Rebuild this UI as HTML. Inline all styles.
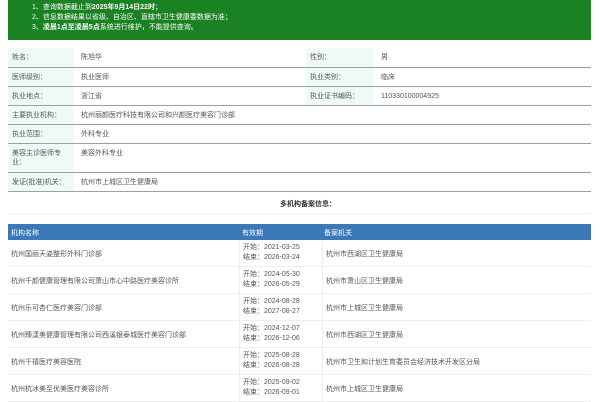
<!DOCTYPE html>
<html><head><meta charset="utf-8"><style>
*{margin:0;padding:0;box-sizing:border-box}
body{width:600px;height:400px;overflow:hidden;background:#fff;font-family:"Liberation Sans","Noto Sans CJK SC",sans-serif;font-size:7px;color:#555;position:relative}
.ban{position:absolute;left:8px;top:0;width:583px;height:40px;background:#1a8222;color:#fff;font-size:7px;line-height:10px;padding:3px 0 0 24px;overflow:hidden}
.ban b{font-weight:bold}
.row{position:absolute;left:8px;width:583px;border-bottom:1px solid #8fa99b}
.c{position:absolute;top:0;bottom:0;padding:5px 4px;line-height:9px}
.lab{background:#f0faf5}
.hd{position:absolute;left:8px;top:224px;width:583px;height:16px;background:#3a78b8;color:#fff}
.hd span{position:absolute;top:4px}
.dr{position:absolute;left:8px;width:583px;height:27px;border-bottom:1px solid #eee}
.dr span{position:absolute}
.v{position:absolute;left:231px;top:0;bottom:0;width:1px;background:#eee}
</style></head><body>
<div class="ban">
<div>1、查询数据截止到<b>2025年9月14日22时</b>；</div>
<div>2、信息数据结果以省级、自治区、直辖市卫生健康委数据为准；</div>
<div>3、<b>凌晨1点至凌晨5点</b>系统进行维护，不能提供查询。</div>
</div>

<div class="row" style="top:48px;height:20px"><div class="c lab" style="left:0;width:66px">姓名：</div><div class="c" style="left:69px">陈旭华</div><div class="c lab" style="left:298px;width:67px">性别：</div><div class="c" style="left:369px">男</div></div>
<div class="row" style="top:68px;height:19px"><div class="c lab" style="left:0;width:66px">医师级别：</div><div class="c" style="left:69px">执业医师</div><div class="c lab" style="left:298px;width:67px">执业类别：</div><div class="c" style="left:369px">临床</div></div>
<div class="row" style="top:87px;height:19px"><div class="c lab" style="left:0;width:66px">执业地点：</div><div class="c" style="left:69px">浙江省</div><div class="c lab" style="left:298px;width:67px">执业证书编码：</div><div class="c" style="left:369px">110330100004925</div></div>
<div class="row" style="top:106px;height:19px"><div class="c lab" style="left:0;width:66px">主要执业机构：</div><div class="c" style="left:69px">杭州丽颜医疗科技有限公司和兴颜医疗美容门诊部</div></div>
<div class="row" style="top:125px;height:19px"><div class="c lab" style="left:0;width:66px">执业范围：</div><div class="c" style="left:69px">外科专业</div></div>
<div class="row" style="top:144px;height:29px"><div class="c lab" style="left:0;width:66px">美容主诊医师专业：</div><div class="c" style="left:69px">美容外科专业</div></div>
<div class="row" style="top:173px;height:19px"><div class="c lab" style="left:0;width:66px">发证(批准)机关：</div><div class="c" style="left:69px">杭州市上城区卫生健康局</div></div>

<div style="position:absolute;left:280px;top:199px;font-weight:bold;color:#333">多机构备案信息：</div>
<div style="position:absolute;left:8px;top:213px;width:583px;height:1px;background:#eee"></div>

<div class="hd"><span style="left:3px">机构名称</span><span style="left:234px">有效期</span><span style="left:316px">备案机关</span></div>

<div class="dr" style="top:240px"><div class="v"></div><div class="v" style="left:314px"></div><span style="left:3px;top:9px">杭州国丽天姿整形外科门诊部</span><span style="left:235px;top:3px;line-height:10px">开始：2021-03-25<br>结束：2026-03-24</span><span style="left:318px;top:9px">杭州市西湖区卫生健康局</span></div>
<div class="dr" style="top:267px"><div class="v"></div><div class="v" style="left:314px"></div><span style="left:3px;top:9px">杭州千颜健康管理有限公司萧山市心中路医疗美容诊所</span><span style="left:235px;top:3px;line-height:10px">开始：2024-05-30<br>结束：2026-05-29</span><span style="left:318px;top:9px">杭州市萧山区卫生健康局</span></div>
<div class="dr" style="top:294px"><div class="v"></div><div class="v" style="left:314px"></div><span style="left:3px;top:9px">杭州乐可杏仁医疗美容门诊部</span><span style="left:235px;top:3px;line-height:10px">开始：2024-08-28<br>结束：2027-08-27</span><span style="left:318px;top:9px">杭州市上城区卫生健康局</span></div>
<div class="dr" style="top:321px"><div class="v"></div><div class="v" style="left:314px"></div><span style="left:3px;top:9px">杭州臻漾美健康管理有限公司西溪银泰城医疗美容门诊部</span><span style="left:235px;top:3px;line-height:10px">开始：2024-12-07<br>结束：2026-12-06</span><span style="left:318px;top:9px">杭州市西湖区卫生健康局</span></div>
<div class="dr" style="top:348px"><div class="v"></div><div class="v" style="left:314px"></div><span style="left:3px;top:9px">杭州千禧医疗美容医院</span><span style="left:235px;top:3px;line-height:10px">开始：2025-08-28<br>结束：2026-08-28</span><span style="left:318px;top:9px">杭州市卫生和计划生育委员会经济技术开发区分局</span></div>
<div class="dr" style="top:375px"><div class="v"></div><div class="v" style="left:314px"></div><span style="left:3px;top:9px">杭州杭冰美至优美医疗美容诊所</span><span style="left:235px;top:3px;line-height:10px">开始：2025-09-02<br>结束：2026-09-01</span><span style="left:318px;top:9px">杭州市上城区卫生健康局</span></div>
</body></html>
